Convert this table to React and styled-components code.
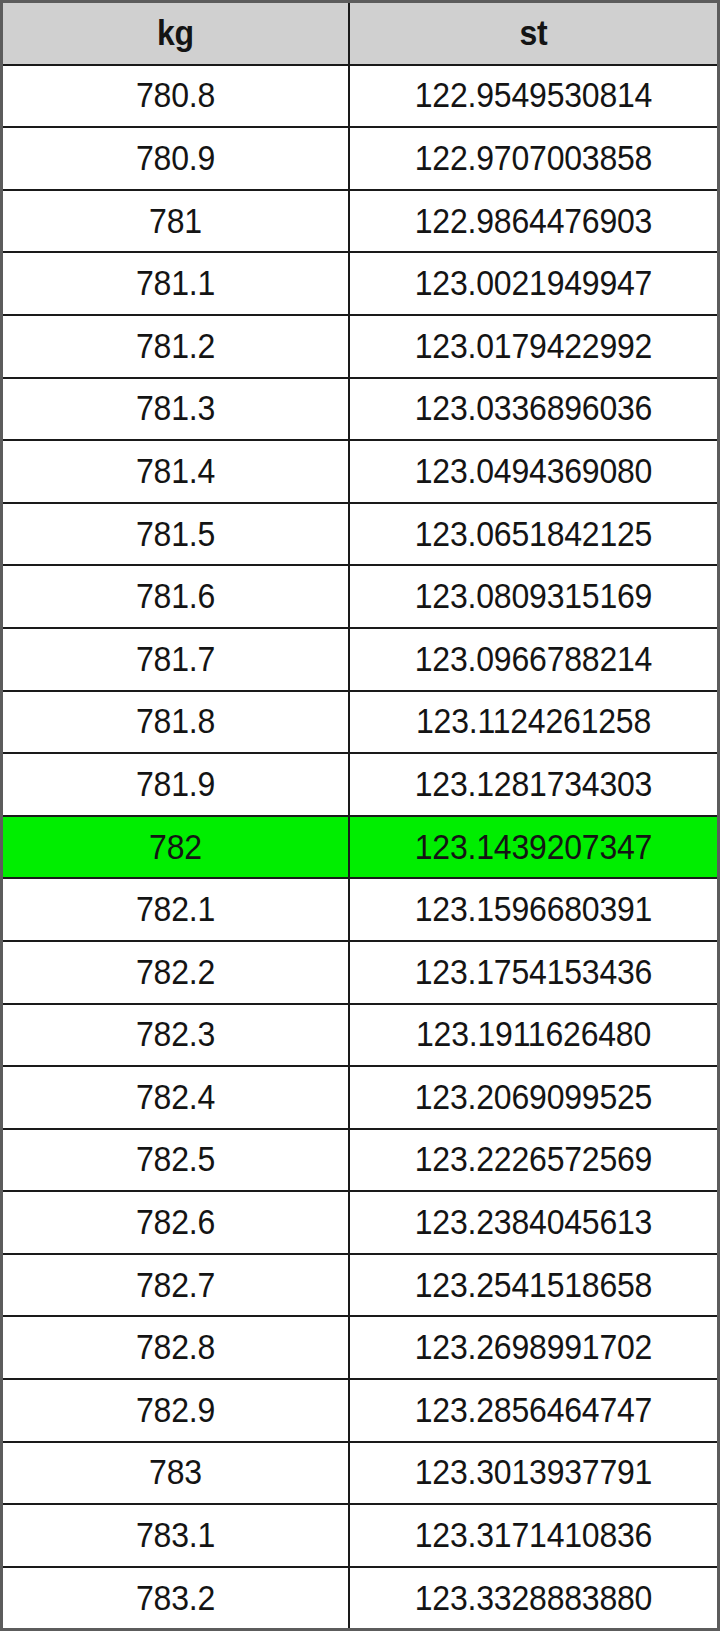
import React from 'react';
import styled, { createGlobalStyle } from 'styled-components';

const GlobalStyle = createGlobalStyle`
  html, body {
    margin: 0;
    padding: 0;
    background: #ffffff;
  }
  body {
    font-family: "Liberation Sans", Arial, sans-serif;
  }
`;

const rows = [
  ['780.8', '122.9549530814'],
  ['780.9', '122.9707003858'],
  ['781', '122.9864476903'],
  ['781.1', '123.0021949947'],
  ['781.2', '123.0179422992'],
  ['781.3', '123.0336896036'],
  ['781.4', '123.0494369080'],
  ['781.5', '123.0651842125'],
  ['781.6', '123.0809315169'],
  ['781.7', '123.0966788214'],
  ['781.8', '123.1124261258'],
  ['781.9', '123.1281734303'],
  ['782', '123.1439207347'],
  ['782.1', '123.1596680391'],
  ['782.2', '123.1754153436'],
  ['782.3', '123.1911626480'],
  ['782.4', '123.2069099525'],
  ['782.5', '123.2226572569'],
  ['782.6', '123.2384045613'],
  ['782.7', '123.2541518658'],
  ['782.8', '123.2698991702'],
  ['782.9', '123.2856464747'],
  ['783', '123.3013937791'],
  ['783.1', '123.3171410836'],
  ['783.2', '123.3328883880'],
];

const Table = styled.div`
  width: 720px;
  box-sizing: border-box;
  border: 3px solid #5c5c5c;
  display: flex;
  flex-direction: column;
`;

const Row = styled.div`
  display: grid;
  grid-template-columns: 347px 1fr;
  height: 62.6px;
  box-sizing: border-box;
  border-bottom: 2px solid #1a1a1a;
  background: ${(p) => (p.$head ? '#d0d0d0' : p.$hit ? '#00ee00' : '#ffffff')};

  &:last-child {
    border-bottom: none;
    height: 60.6px;
  }
`;

const Cell = styled.div`
  display: flex;
  align-items: center;
  justify-content: center;
  font-size: 32px;
  font-weight: ${(p) => (p.$head ? 700 : 400)};
  color: #141414;
  letter-spacing: -0.2px;

  &:first-child {
    border-right: 2px solid #1a1a1a;
  }
`;

/* the source font is a little taller than Liberation Sans at the same width */
const Text = styled.span`
  display: inline-block;
  transform: scaleY(1.08);
`;

export default function App() {
  return (
    <>
      <GlobalStyle />
      <Table>
        <Row $head>
          <Cell $head><Text>kg</Text></Cell>
          <Cell $head><Text>st</Text></Cell>
        </Row>
        {rows.map(([kg, st]) => (
          <Row key={kg} $hit={kg === '782'}>
            <Cell><Text>{kg}</Text></Cell>
            <Cell><Text>{st}</Text></Cell>
          </Row>
        ))}
      </Table>
    </>
  );
}
